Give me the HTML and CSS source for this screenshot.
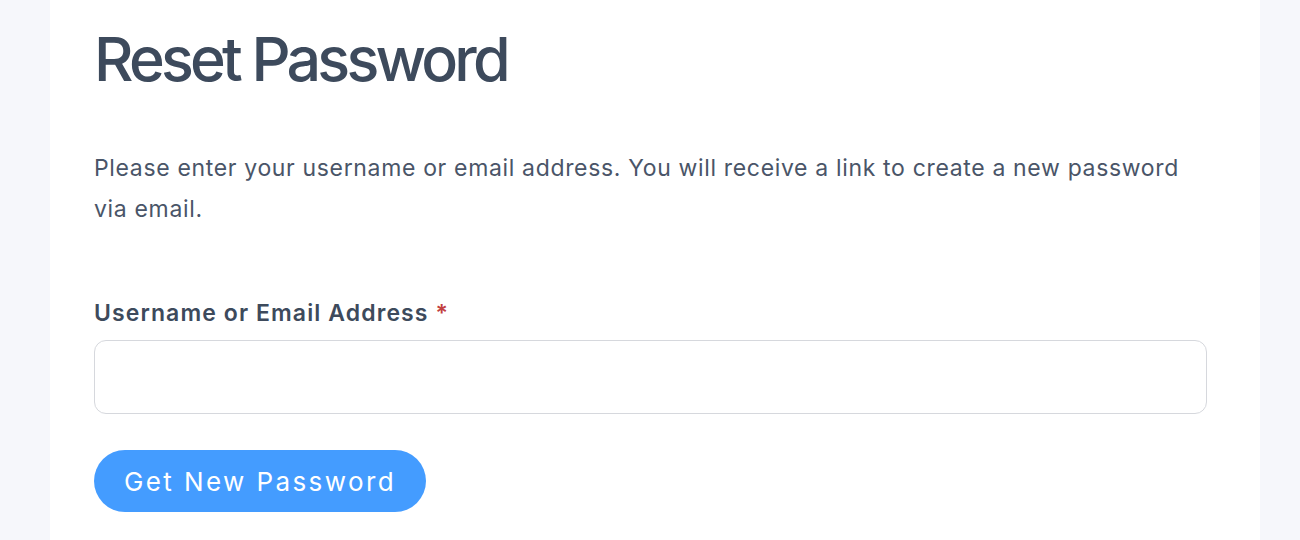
FILE: index.html
```html
<!DOCTYPE html>
<html lang="en">
<head>
<meta charset="utf-8">
<title>Reset Password</title>
<link rel="stylesheet" href="styles.css">
</head>
<body>
<main class="card">
  <h1 class="title">Reset Password</h1>
  <p class="intro">Please enter your username or email address. You will receive a link to create a new password via email.</p>
  <form class="form">
    <label class="label" for="user">Username or Email Address <span class="req">*</span></label>
    <input class="input" id="user" type="text">
    <button class="btn" type="button">Get New Password</button>
  </form>
</main>
</body>
</html>
```
FILE: styles.css
```css
html, body {
  margin: 0;
  padding: 0;
}
body {
  background: #f6f7fb;
  font-family: Inter, "Noto Sans", sans-serif;
  height: 540px;
  overflow: hidden;
}
.card {
  background: #ffffff;
  margin-left: 50px;
  width: 1210px;
  box-sizing: border-box;
  padding: 21px 44px 40px 44px;
  min-height: 540px;
}
.title {
  margin: 0;
  font-size: 61px;
  font-weight: 500;
  letter-spacing: -3.8px;
  color: #3d4a5c;
  line-height: 76px;
}
.intro {
  margin: 51px 0 0 0;
  max-width: 1113px;
  font-size: 23px;
  letter-spacing: 0.66px;
  line-height: 41px;
  color: #4a5568;
}
.form {
  display: flex;
  flex-direction: column;
  align-items: flex-start;
  margin-top: 68px;
}
.label {
  font-size: 23px;
  font-weight: 600;
  letter-spacing: 1.1px;
  color: #3d4a5c;
  line-height: 30px;
}
.req {
  color: #c24040;
}
.input {
  margin-top: 12px;
  width: 1113px;
  height: 74px;
  box-sizing: border-box;
  border: 1px solid #d6d8dd;
  border-radius: 12px;
  background: #fff;
}
.btn {
  margin-top: 36px;
  height: 62px;
  padding: 0 30px;
  border: none;
  border-radius: 31px;
  background: #449cff;
  color: #fff;
  font-family: Inter, "Noto Sans", sans-serif;
  font-size: 26px;
  letter-spacing: 2.4px;
}
```
